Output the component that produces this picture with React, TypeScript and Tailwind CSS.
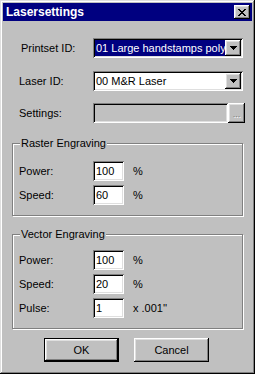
import React from 'react';

const sunken =
  'shadow-[inset_1px_1px_#808080,inset_-1px_-1px_#ffffff,inset_2px_2px_#000000,inset_-2px_-2px_#dfdfdf]';
const raised =
  'shadow-[inset_-1px_-1px_#000000,inset_1px_1px_#ffffff,inset_-2px_-2px_#808080,inset_2px_2px_#dfdfdf]';

function Arrow() {
  return (
    <svg width="7" height="4" viewBox="0 0 7 4" shapeRendering="crispEdges">
      <path d="M0 0h7v1H0zM1 1h5v1H1zM2 2h3v1H2zM3 3h1v1H3z" fill="#000" />
    </svg>
  );
}

function Combo({ value, selected }: { value: string; selected?: boolean }) {
  return (
    <div className={`w-[150px] h-[20px] bg-white flex p-[2px] ${sunken}`}>
      <div
        className={`flex-1 min-w-0 overflow-hidden whitespace-nowrap leading-[16px] px-[1px] ${
          selected ? 'bg-[#000080] text-white' : 'text-black'
        }`}
      >
        {value}
      </div>
      <div className={`w-[16px] h-[16px] bg-[#c0c0c0] flex items-center justify-center shrink-0 ${raised}`}>
        <Arrow />
      </div>
    </div>
  );
}

function Field({ label, value, unit }: { label: string; value: string; unit: string }) {
  return (
    <div className="flex items-center h-[20px]">
      <span className="w-[74px]">{label}</span>
      <div className={`w-[31px] h-[20px] bg-white px-[3px] leading-[20px] ${sunken}`}>{value}</div>
      <span className="ml-[9px]">{unit}</span>
    </div>
  );
}

function Group({ title, children, className }: { title: string; children: React.ReactNode; className?: string }) {
  return (
    <div
      className={`relative w-[231px] border border-[#808080] shadow-[inset_1px_1px_#ffffff,1px_1px_#ffffff] pl-[6px] flex flex-col gap-[4px] ${className}`}
    >
      <span className="absolute -top-[7px] left-[7px] bg-[#c0c0c0] px-[1px] leading-[13px]">{title}</span>
      {children}
    </div>
  );
}

export default function App() {
  return (
    <div className="w-[255px] h-[374px] bg-[#c0c0c0] p-[3px] flex flex-col text-[11px] text-black font-['Liberation_Sans',Arial,sans-serif] shadow-[inset_-1px_-1px_#000000,inset_1px_1px_#dfdfdf,inset_-2px_-2px_#808080,inset_2px_2px_#ffffff]">
      {/* Title bar */}
      <div className="h-[18px] bg-[#000080] flex items-center justify-between pl-[3px] pr-[2px]">
        <span className="text-white font-bold text-[12px] leading-none">Lasersettings</span>
        <div className={`w-[16px] h-[14px] bg-[#c0c0c0] flex items-center justify-center ${raised}`}>
          <svg width="8" height="7" viewBox="0 0 8 7" shapeRendering="crispEdges">
            <path
              d="M0 0h2v1H0zM6 0h2v1H6zM1 1h2v1H1zM5 1h2v1H5zM2 2h4v1H2zM3 3h2v1H3zM2 4h4v1H2zM1 5h2v1H1zM5 5h2v1H5zM0 6h2v1H0zM6 6h2v1H6z"
              fill="#000"
            />
          </svg>
        </div>
      </div>

      <div className="flex-1 flex flex-col pl-[9px]">
        <div className="flex items-center mt-[17px]">
          <span className="w-[81px] pl-[9px]">Printset ID:</span>
          <Combo value="01 Large handstamps polymer" selected />
        </div>
        <div className="flex items-center mt-[13px]">
          <span className="w-[81px] pl-[7px]">Laser ID:</span>
          <Combo value="00 M&R Laser" />
        </div>
        <div className="flex items-center mt-[12px]">
          <span className="w-[81px] pl-[7px]">Settings:</span>
          <div className={`w-[135px] h-[20px] bg-[#c0c0c0] ${sunken}`} />
          <div
            className={`w-[17px] h-[20px] bg-[#c0c0c0] pt-[6px] text-center text-[9px] leading-[10px] text-[#808080] [text-shadow:1px_1px_#ffffff] ${raised}`}
          >
            ...
          </div>
        </div>

        <Group title="Raster Engraving" className="mt-[20px] pt-[17px] pb-[10px]">
          <Field label="Power:" value="100" unit="%" />
          <Field label="Speed:" value="60" unit="%" />
        </Group>

        <Group title="Vector Engraving" className="mt-[18px] pt-[15px] pb-[10px]">
          <Field label="Power:" value="100" unit="%" />
          <Field label="Speed:" value="20" unit="%" />
          <Field label="Pulse:" value="1" unit="x .001''" />
        </Group>

        <div className="flex mt-[9px] ml-[32px] gap-[15px]">
          <div className="w-[75px] h-[24px] border border-black">
            <div className={`w-full h-full flex items-center justify-center ${raised}`}>OK</div>
          </div>
          <div className={`w-[75px] h-[24px] flex items-center justify-center ${raised}`}>Cancel</div>
        </div>
      </div>
    </div>
  );
}
